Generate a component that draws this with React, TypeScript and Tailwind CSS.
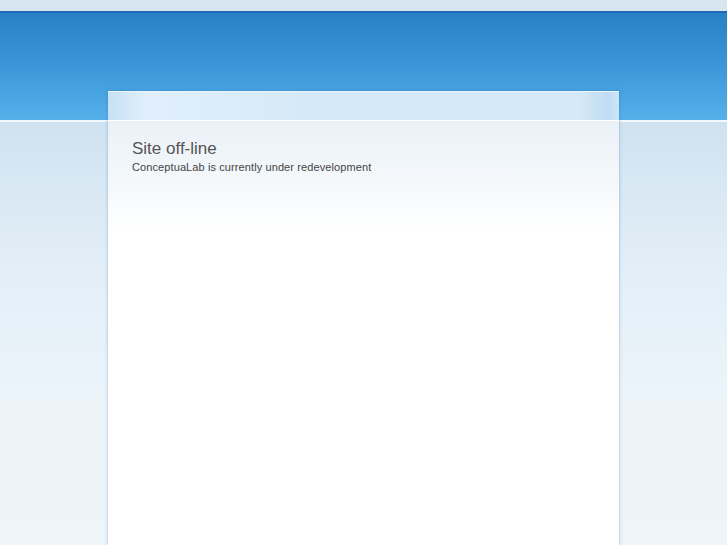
export default function App() {
  return (
    <div className="relative w-full h-[545px] overflow-hidden bg-[linear-gradient(to_bottom,#cfe2f0_121px,#e2eef7_260px,#ecf4fa_400px,#edf4fa_545px)]" style={{ fontFamily: '"Liberation Sans", Arial, sans-serif' }}>
      <div className="h-[11px] bg-[#d7e6f1]" />
      <div className="h-[2px] bg-[#1d6bb5]" />
      <div className="h-[107px] bg-[linear-gradient(to_bottom,#2781c3,#3b97d8_50%,#55b0ea)]" />
      <div className="h-[2px] bg-[#f4f9fd]" />
      <div className="absolute left-[108px] top-[91px] w-[511px] h-[454px] bg-white shadow-[0_0_3px_rgba(40,100,160,0.4)] flex flex-col">
        <div className="h-[29px] border-t border-[#eaf4fc] bg-[linear-gradient(to_right,#c7e1f6_0px,#e0effb_40px,#d6e9f8_200px,#d6e9f8_470px,#c0dcf3_500px,#cfe5f7_511px)]" />
        <div className="h-[1px] bg-[#ffffff]" />
        <div className="flex-1 bg-[linear-gradient(to_bottom,#eaf1f7,#f4f8fb_60px,#ffffff_110px)] px-[24px] pt-[18px]">
          <h1 className="text-[17px] leading-[20px] text-[#555555]">Site off-line</h1>
          <p className="mt-[2px] text-[11px] leading-[13px] tracking-[0.1px] text-[#444444]">ConceptuaLab is currently under redevelopment</p>
        </div>
      </div>
    </div>
  );
}
